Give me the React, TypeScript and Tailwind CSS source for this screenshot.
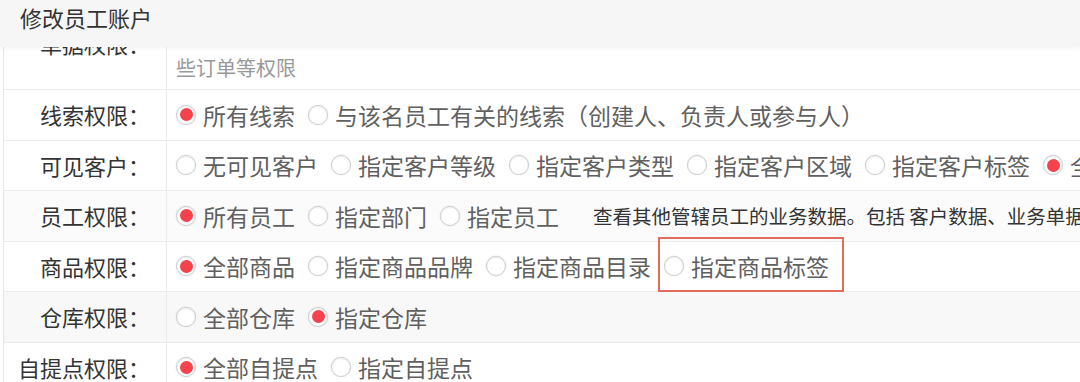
import React from 'react';

const FONT = "font-['Noto_Sans_CJK_SC','Noto_Sans',sans-serif]";

type Opt = { label: string; checked?: boolean; marked?: boolean };

type Row = { title: string; options: Opt[]; note?: string; bg?: string };

const rows: Row[] = [
  {
    title: '线索权限',
    options: [{ label: '所有线索', checked: true }, { label: '与该名员工有关的线索（创建人、负责人或参与人）' }],
  },
  {
    title: '可见客户',
    options: [
      { label: '无可见客户' },
      { label: '指定客户等级' },
      { label: '指定客户类型' },
      { label: '指定客户区域' },
      { label: '指定客户标签' },
      { label: '全部客户', checked: true },
    ],
  },
  {
    title: '员工权限',
    options: [{ label: '所有员工', checked: true }, { label: '指定部门' }, { label: '指定员工' }],
    note: '查看其他管辖员工的业务数据。包括 客户数据、业务单据等',
    bg: 'bg-[#fbfbfb]',
  },
  {
    title: '商品权限',
    options: [
      { label: '全部商品', checked: true },
      { label: '指定商品品牌' },
      { label: '指定商品目录' },
      { label: '指定商品标签', marked: true },
    ],
  },
  {
    title: '仓库权限',
    options: [{ label: '全部仓库' }, { label: '指定仓库', checked: true }],
    bg: 'bg-[#f8f8f8]',
  },
  {
    title: '自提点权限',
    options: [{ label: '全部自提点', checked: true }, { label: '指定自提点' }],
  },
];

function Radio({ checked }: { checked?: boolean }) {
  return (
    <span className="flex h-5 w-5 shrink-0 items-center justify-center rounded-full border border-[#cfcfcf] bg-white shadow-[0_0_2px_rgba(0,0,0,0.12),inset_0_1px_2px_rgba(0,0,0,0.06)]">
      {checked && <span className="h-[13px] w-[13px] rounded-full bg-[#f5424c]" />}
    </span>
  );
}

function Option({ opt }: { opt: Opt }) {
  return (
    <label className="relative flex shrink-0 items-center">
      <Radio checked={opt.checked} />
      <span className="ml-[7px] whitespace-nowrap text-[23px] leading-[30px] text-[#606060]">{opt.label}</span>
      {opt.marked && (
        <span className="pointer-events-none absolute -left-[6px] -right-[15px] -top-[14px] -bottom-[11px] border-2 border-[#e06c5c]" />
      )}
    </label>
  );
}

export default function App() {
  return (
    <div className={`h-[382px] w-[1080px] overflow-hidden bg-white ${FONT}`}>
      <div className="relative z-10 flex h-[47px] items-start bg-[#f6f6f6] pl-5 pt-[3px] shadow-[0_2px_4px_rgba(0,0,0,0.04)]">
        <span className="text-[22px] leading-[28px] text-[#333]">修改员工账户</span>
      </div>

      <div className="h-[335px] overflow-hidden">
        <div className="-mt-[37px] ml-[3px] border-l border-[#e6e6e6]">
          {/* partly scrolled-out row */}
          <div className="flex h-[80px] border-b border-[#ebebeb]">
            <div className="flex w-[163px] shrink-0 items-center justify-end border-r border-[#ebebeb] pb-[12px] pr-4 text-[22px] text-[#333]">
              单据权限：
            </div>
            <div className="flex flex-col justify-end pb-[4px] pl-[9px] text-[20px] leading-[34px] text-[#999]">
              <div className="whitespace-nowrap">可以查看和操作本人及下属创建的订单、退货单、收款单等，以及这</div>
              <div className="whitespace-nowrap">些订单等权限</div>
            </div>
          </div>

          {rows.map((row) => (
            <div key={row.title} className={`flex h-[50.5px] border-b border-[#ebebeb] ${row.bg ?? ''}`}>
              <div className="flex w-[163px] shrink-0 items-center justify-end border-r border-[#ebebeb] pr-4 text-[22px] text-[#333]">
                {row.title}：
              </div>
              <div className="flex items-center gap-[13px] pl-[9px]">
                {row.options.map((o) => (
                  <Option key={o.label} opt={o} />
                ))}
                {row.note && (
                  <span className="ml-[21px] whitespace-nowrap text-[19.5px] text-[#333]">{row.note}</span>
                )}
              </div>
            </div>
          ))}
        </div>
      </div>
    </div>
  );
}
